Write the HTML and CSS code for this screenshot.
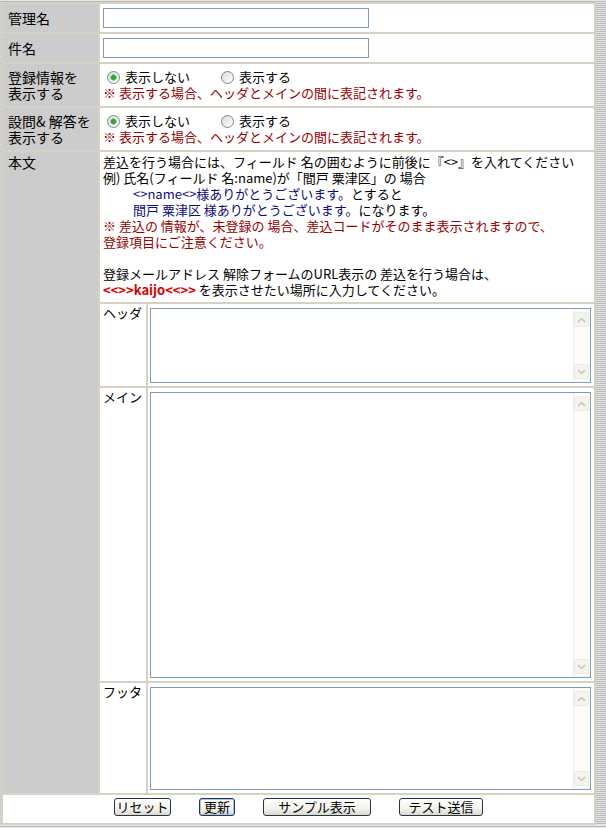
FILE: index.html
```html
<!DOCTYPE html>
<html lang="ja">
  <head>
    <meta charset="UTF-8" />
    <title>メール編集</title>
    <link rel="stylesheet" href="styles.css">
  </head>
  <body>
    <form class="edit">
      <table class="form">
        <tr>
          <th>管理名</th>
          <td class="field"><input type="text" class="text" name="title"></td>
        </tr>
        <tr>
          <th>件名</th>
          <td class="field"><input type="text" class="text" name="subject"></td>
        </tr>
        <tr>
          <th>登録情報を<br>表示する</th>
          <td class="opt">
            <div class="radios">
              <label><input type="radio" name="show_info" checked>表示しない</label>
              <label><input type="radio" name="show_info">表示する</label>
            </div>
            <div class="note">※ 表示する場合、ヘッダとメインの間に表記されます。</div>
          </td>
        </tr>
        <tr>
          <th>設問&amp; 解答を<br>表示する</th>
          <td class="opt">
            <div class="radios">
              <label><input type="radio" name="show_answer" checked>表示しない</label>
              <label><input type="radio" name="show_answer">表示する</label>
            </div>
            <div class="note">※ 表示する場合、ヘッダとメインの間に表記されます。</div>
          </td>
        </tr>
        <tr>
          <th class="top">本文</th>
          <td class="body">
            <div class="help">
              差込を行う場合には、フィールド 名の囲むように前後に『&lt;&gt;』を入れてください<br>
              例) 氏名(フィールド 名:name)が「間戸 粟津区」の 場合<br>
              <span class="indent"><span class="blue">&lt;&gt;name&lt;&gt;様ありがとうございます。</span>とすると</span><br>
              <span class="indent"><span class="blue">間戸 粟津区 様ありがとうございます。</span>になります。</span><br>
              <span class="note">※ 差込の 情報が、未登録の 場合、差込コードがそのまま表示されますので、<br>
              登録項目にご注意ください。</span><br>
              <br>
              登録メールアドレス 解除フォームのURL表示の 差込を行う場合は、<br>
              <b class="code">&lt;&lt;&gt;&gt;kaijo&lt;&lt;&gt;&gt;</b> を表示させたい場所に入力してください。
            </div>
            <table class="parts">
              <tr>
                <th>ヘッダ</th>
                <td>
                  <div class="memo memo-head">
                    <textarea name="header"></textarea>
                    <div class="sbar"><span class="arrow"><svg width="9" height="6" viewBox="0 0 9 6"><polyline points="1,5 4.5,1.5 8,5" fill="none" stroke="#c6c4b8" stroke-width="1.5"/></svg></span><span class="arrow"><svg width="9" height="6" viewBox="0 0 9 6"><polyline points="1,1 4.5,4.5 8,1" fill="none" stroke="#c6c4b8" stroke-width="1.5"/></svg></span></div>
                  </div>
                </td>
              </tr>
              <tr>
                <th>メイン</th>
                <td>
                  <div class="memo memo-main">
                    <textarea name="main"></textarea>
                    <div class="sbar"><span class="arrow"><svg width="9" height="6" viewBox="0 0 9 6"><polyline points="1,5 4.5,1.5 8,5" fill="none" stroke="#c6c4b8" stroke-width="1.5"/></svg></span><span class="arrow"><svg width="9" height="6" viewBox="0 0 9 6"><polyline points="1,1 4.5,4.5 8,1" fill="none" stroke="#c6c4b8" stroke-width="1.5"/></svg></span></div>
                  </div>
                </td>
              </tr>
              <tr>
                <th>フッタ</th>
                <td>
                  <div class="memo memo-foot">
                    <textarea name="footer"></textarea>
                    <div class="sbar"><span class="arrow"><svg width="9" height="6" viewBox="0 0 9 6"><polyline points="1,5 4.5,1.5 8,5" fill="none" stroke="#c6c4b8" stroke-width="1.5"/></svg></span><span class="arrow"><svg width="9" height="6" viewBox="0 0 9 6"><polyline points="1,1 4.5,4.5 8,1" fill="none" stroke="#c6c4b8" stroke-width="1.5"/></svg></span></div>
                  </div>
                </td>
              </tr>
            </table>
          </td>
        </tr>
        <tr>
          <td colspan="2" class="actions">
            <div class="buttons">
              <button type="reset" class="btn w-reset">リセット</button>
              <button type="submit" class="btn btn-default w-save">更新</button>
              <button type="button" class="btn w-sample">サンプル表示</button>
              <button type="button" class="btn w-test">テスト送信</button>
            </div>
          </td>
        </tr>
      </table>
    </form>
  </body>
</html>
```

FILE: styles.css
```css
html {
  background: repeating-linear-gradient(to bottom, #e6e6e6 0 1px, #b9b9b9 1px 2px);
  font-family: "Noto Sans CJK JP", sans-serif;
  font-size: 13px;
  line-height: 16px;
  color: #000000;
}

body {
  margin: 0;
  padding: 2px 0 0 1px;
}

.form {
  width: 595px;
  table-layout: fixed;
  border-collapse: separate;
  border-spacing: 2px;
  background-color: #d5d1c3;
}

.form > tbody > tr > th {
  width: 90px;
  padding: 0 0 0 5px;
  background-color: #cccccc;
  font-size: 14px;
  font-weight: normal;
  text-align: left;
  vertical-align: middle;
  white-space: nowrap;
}

.form > tbody > tr > th.top {
  vertical-align: top;
  padding-top: 2px;
}

.form td {
  background-color: #ffffff;
  padding: 0;
}

.field {
  padding: 4px 3px !important;
}

input.text {
  display: block;
  box-sizing: border-box;
  width: 266px;
  height: 20px;
  margin: 0;
  border: 1px solid #7f9db9;
  font: inherit;
}

.opt {
  padding: 5px 3px !important;
}

.radios {
  display: flex;
  height: 16px;
  align-items: center;
}

.radios label {
  display: flex;
  align-items: center;
  width: 114px;
}

input[type="radio"] {
  appearance: none;
  -webkit-appearance: none;
  box-sizing: border-box;
  width: 13px;
  height: 13px;
  margin: 0 5px 0 4px;
  border: 1px solid #6f8aa6;
  border-radius: 50%;
  background: linear-gradient(135deg, #dcdad0, #ffffff);
}

input[type="radio"]:checked {
  background:
    radial-gradient(circle, #2fa62f 0 2px, #8fd28f 3px, transparent 3.5px),
    linear-gradient(135deg, #dcdad0, #ffffff);
}

.note {
  color: #990000;
}

.blue {
  color: #0c0c7c;
}

.code {
  color: #dd0000;
}

.indent {
  padding-left: 30px;
}

.help {
  padding: 2px 3px 4px;
  white-space: nowrap;
}

/* nested table for header / main / footer */
.parts {
  width: calc(100% + 4px);
  margin: 0 -2px -2px;
  border-collapse: separate;
  border-spacing: 2px;
  background-color: #d5d1c3;
}

.parts th {
  width: 43px;
  padding: 1px 0 0 3px;
  background-color: #ffffff;
  font-weight: normal;
  text-align: left;
  vertical-align: top;
}

.parts td {
  padding: 4px 3px 3px 2px;
}

.memo {
  display: flex;
  box-sizing: border-box;
  width: 441px;
  border: 1px solid #7f9db9;
  background-color: #ffffff;
}

.memo-head {
  height: 75px;
}

.memo-main {
  height: 286px;
}

.memo-foot {
  height: 103px;
}

.memo textarea {
  flex: 1;
  border: 0;
  margin: 0;
  padding: 2px;
  resize: none;
  outline: none;
  font: inherit;
}

.sbar {
  display: flex;
  flex-direction: column;
  justify-content: space-between;
  width: 15px;
  padding: 3px 1px 3px 0;
  border-left: 1px solid #f0efe9;
  background-color: #fcfcfa;
}

.arrow {
  display: flex;
  align-items: center;
  justify-content: center;
  box-sizing: border-box;
  width: 15px;
  height: 15px;
  border: 1px solid #eceae1;
  border-radius: 2px;
  background-color: #f4f3ee;
}

.actions {
  padding: 3px 0 7px !important;
}

.buttons {
  display: flex;
  justify-content: center;
  gap: 28px;
}

.btn {
  display: flex;
  align-items: center;
  justify-content: center;
  box-sizing: border-box;
  height: 18px;
  padding: 0;
  border: 1px solid #24344a;
  border-radius: 3px;
  background: linear-gradient(to bottom, #ffffff, #f3f2ec 60%, #dcd8cc);
  font: inherit;
  line-height: 16px;
  color: #000000;
}

.btn-default {
  box-shadow: inset 0 0 0 1px #a9c4ec;
}

.w-reset {
  width: 57px;
}

.w-save {
  width: 36px;
}

.w-sample {
  width: 108px;
}

.w-test {
  width: 84px;
}
```
